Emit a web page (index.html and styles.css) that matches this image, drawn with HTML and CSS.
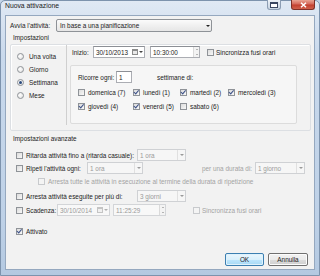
FILE: index.html
```html
<!DOCTYPE html>
<html lang="it">
<head>
<meta charset="utf-8">
<title>Nuova attivazione</title>
<link rel="stylesheet" href="styles.css">
</head>
<body>
<div class="window">
  <div class="titlebar">
    <span class="title">Nuova attivazione</span>
    <span class="tb-btn restore"><svg width="8" height="6" viewBox="0 0 8 6"><rect x="0.5" y="0.5" width="7" height="5" fill="#fff" stroke="#3a4660"/><line x1="0.5" y1="1.5" x2="7.5" y2="1.5" stroke="#3a4660"/></svg></span>
    <span class="tb-btn close"><svg width="7" height="6" viewBox="0 0 7 6"><path d="M1 0.8 L6 5.2 M6 0.8 L1 5.2" stroke="#fff" stroke-width="1.5"/></svg></span>
  </div>
  <div class="client">
    <div class="row start-row">
      <span class="lbl w-avvia">Avvia l'attività:</span>
      <span class="combo main-combo"><span class="combo-text">In base a una pianificazione</span><span class="arrow"></span></span>
    </div>
    <div class="section-label">Impostazioni</div>
    <div class="group">
      <div class="freq">
        <div class="radio-row"><span class="radio"></span>Una volta</div>
        <div class="radio-row"><span class="radio"></span>Giorno</div>
        <div class="radio-row"><span class="radio on"></span>Settimana</div>
        <div class="radio-row"><span class="radio"></span>Mese</div>
      </div>
      <div class="detail">
        <div class="row inizio">
          <span class="lbl w-inizio">Inizio:</span>
          <span class="field date"><span class="field-text">30/10/2013</span><span class="cal"></span></span>
          <span class="field time"><span class="field-text">10:30:00</span><span class="spin"></span></span>
          <span class="cb sync"></span><span class="lbl">Sincronizza fusi orari</span>
        </div>
        <div class="recur">
          <div class="row">
            <span class="lbl w-ricorre">Ricorre ogni:</span>
            <span class="field num"><span class="field-text">1</span></span>
            <span class="lbl settimane">settimane di:</span>
          </div>
          <div class="days">
            <div class="day"><span class="cb"></span>domenica (7)</div>
            <div class="day"><span class="cb on"></span>lunedì (1)</div>
            <div class="day"><span class="cb on"></span>martedì (2)</div>
            <div class="day"><span class="cb on"></span>mercoledì (3)</div>
            <div class="day"><span class="cb on"></span>giovedì (4)</div>
            <div class="day"><span class="cb on"></span>venerdì (5)</div>
            <div class="day"><span class="cb"></span>sabato (6)</div>
          </div>
        </div>
      </div>
    </div>
    <div class="section-label adv-label">Impostazioni avanzate</div>
    <div class="adv">
      <div class="row r1">
        <span class="cb"></span><span class="lbl w-long">Ritarda attività fino a (ritarda casuale):</span>
        <span class="combo dis w49"><span class="combo-text">1 ora</span><span class="arrow"></span></span>
      </div>
      <div class="row r2">
        <span class="cb"></span><span class="lbl w-ripeti">Ripeti l'attività ogni:</span>
        <span class="combo dis w56"><span class="combo-text">1 ora</span><span class="arrow"></span></span>
        <span class="lbl gray durata">per una durata di:</span>
        <span class="combo dis w50"><span class="combo-text">1 giorno</span><span class="arrow"></span></span>
      </div>
      <div class="row r3">
        <span class="cb dis"></span><span class="lbl gray">Arresta tutte le attività in esecuzione al termine della durata di ripetizione</span>
      </div>
      <div class="row r4">
        <span class="cb"></span><span class="lbl w-long">Arresta attività eseguite per più di:</span>
        <span class="combo dis w49"><span class="combo-text">3 giorni</span><span class="arrow"></span></span>
      </div>
      <div class="row r5">
        <span class="cb"></span><span class="lbl w-scad">Scadenza:</span>
        <span class="field dis date2"><span class="field-text">30/10/2014</span><span class="cal"></span></span>
        <span class="field dis time2"><span class="field-text">11:25:29</span><span class="spin"></span></span>
        <span class="cb dis sync2"></span><span class="lbl gray">Sincronizza fusi orari</span>
      </div>
      <div class="row r6">
        <span class="cb on"></span><span class="lbl">Attivato</span>
      </div>
    </div>
    <div class="buttons">
      <span class="btn ok">OK</span>
      <span class="btn">Annulla</span>
    </div>
  </div>
</div>
</body>
</html>
```
FILE: styles.css
```css
html, body {
  margin: 0;
  padding: 0;
}
body {
  width: 320px;
  height: 276px;
  overflow: hidden;
  font-family: "Liberation Sans", Arial, sans-serif;
  font-size: 6.4px;
  color: #222;
  background: #c4d5e8;
}
.window {
  box-sizing: border-box;
  width: 320px;
  height: 276px;
  display: flex;
  flex-direction: column;
  padding: 0 4px 5px 4px;
  background: linear-gradient(#e0e9f4, #c9d9ec 20%, #bed1e7 80%, #b4c9e1);
  border: 1px solid #7d93ad;
  border-radius: 5px 5px 0 0;
}
.titlebar {
  height: 14px;
  display: flex;
  align-items: flex-start;
  flex-shrink: 0;
}
.title {
  font-size: 6.8px;
  line-height: 10px;
  color: #1a1a1a;
}
.tb-btn {
  box-sizing: border-box;
  height: 10px;
  margin-top: -1px;
  display: flex;
  align-items: center;
  justify-content: center;
  border-radius: 0 0 3px 3px;
}
.restore {
  margin-left: auto;
  margin-right: 10px;
  width: 14px;
  border: 1px solid #8c9db3;
  border-top: none;
  background: linear-gradient(#eef2f7, #d8e1eb 50%, #c9d5e2);
}
.close {
  width: 24px;
  border: 1px solid #7f3027;
  border-top: none;
  background: linear-gradient(#e8a493, #d5685a 45%, #c2402f 55%, #d0604c);
}
.client {
  box-sizing: border-box;
  height: 255px;
  display: flex;
  flex-direction: column;
  background: #f2f2f2;
  border: 1px solid #95a8bf;
  padding: 3px 3px 3px 4px;
}
.row {
  display: flex;
  align-items: center;
  height: 12px;
  white-space: nowrap;
}
.lbl {
  white-space: nowrap;
}
.gray {
  color: #a3a3a3;
}
.start-row {
  height: 13px;
}
.w-avvia { width: 46px; }
.combo {
  box-sizing: border-box;
  height: 12px;
  display: flex;
  align-items: center;
  border: 1px solid #a7abb1;
  background: #fff;
  padding-left: 2px;
}
.main-combo {
  width: 156px;
  height: 13px;
  border-color: #8e9297;
  background: linear-gradient(#fbfbfb, #f0f0f0 50%, #e6e6e6);
  border-radius: 2px;
  padding-left: 3px;
}
.combo-text {
  flex: 1;
}
.arrow {
  width: 7px;
  height: 100%;
  display: flex;
  align-items: center;
  justify-content: center;
}
.arrow::after {
  content: "";
  border-left: 2px solid transparent;
  border-right: 2px solid transparent;
  border-top: 2px solid #222;
}
.combo.dis {
  border-color: #cfd1d4;
  background: #f6f6f6;
  color: #9a9a9a;
}
.combo.dis .arrow {
  border-left: 1px solid #e0e0e0;
}
.combo.dis .arrow::after {
  border-top-color: #9a9a9a;
}
.w49 { width: 49px; }
.w56 { width: 56px; }
.w50 { width: 50px; }
.section-label {
  margin-top: 2px;
  height: 8px;
  line-height: 8px;
  padding-left: 3px;
}
.group {
  box-sizing: border-box;
  margin-top: 2px;
  height: 87px;
  display: flex;
  align-items: flex-start;
  border: 1px solid #dcdfe3;
  border-radius: 2px;
  box-shadow: inset 1px 1px 0 #fff;
}
.freq {
  box-sizing: border-box;
  width: 56px;
  height: 80px;
  padding: 5px 0 0 6px;
  border-right: 1px solid #cfcfcf;
}
.radio-row {
  height: 13px;
  display: flex;
  align-items: center;
}
.radio {
  box-sizing: border-box;
  width: 7px;
  height: 7px;
  border-radius: 50%;
  border: 1px solid #8f9398;
  background: radial-gradient(circle at 40% 40%, #fff, #dcdcdc);
  margin-right: 5px;
  display: flex;
  align-items: center;
  justify-content: center;
}
.radio.on::after {
  content: "";
  width: 3px;
  height: 3px;
  border-radius: 50%;
  background: #2a4a7c;
}
.detail {
  flex: 1;
  box-sizing: border-box;
  padding: 1px 13px 0 3px;
}
.inizio {
  padding-left: 2px;
}
.w-inizio { width: 21px; }
.field {
  box-sizing: border-box;
  height: 12px;
  display: flex;
  align-items: center;
  border: 1px solid #abadb3;
  border-top-color: #8c8f95;
  background: #fff;
  padding-left: 2px;
}
.field-text {
  flex: 1;
}
.field.dis {
  border-color: #d3d5d8;
  background: #f8f8f8;
  color: #9a9a9a;
}
.date { width: 52px; margin-right: 5px; }
.time { width: 50px; }
.cal {
  width: 12px;
  height: 8px;
  display: flex;
  align-items: center;
  gap: 1px;
}
.cal::before {
  content: "";
  box-sizing: border-box;
  width: 6px;
  height: 6px;
  border: 1px solid #8c8c8c;
  border-top-width: 2px;
  background: #e9e9e9;
}
.cal::after {
  content: "";
  border-left: 2px solid transparent;
  border-right: 2px solid transparent;
  border-top: 2px solid #444;
}
.field.dis .cal::before { border-color: #c4c4c4; background: #f0f0f0; }
.field.dis .cal::after { border-top-color: #b0b0b0; }
.spin {
  box-sizing: border-box;
  width: 6px;
  height: 10px;
  display: flex;
  flex-direction: column;
  align-items: center;
  justify-content: space-around;
  border-left: 1px solid #dadada;
  background: #f3f3f3;
}
.spin::before {
  content: "";
  border-left: 1.5px solid transparent;
  border-right: 1.5px solid transparent;
  border-bottom: 1.5px solid #777;
}
.spin::after {
  content: "";
  border-left: 1.5px solid transparent;
  border-right: 1.5px solid transparent;
  border-top: 1.5px solid #777;
}
.cb {
  box-sizing: border-box;
  flex-shrink: 0;
  width: 7px;
  height: 7px;
  border: 1px solid #8f9398;
  background: linear-gradient(135deg, #dcdcdc, #f8f8f8);
  margin-right: 3px;
  position: relative;
}
.cb.on::after {
  content: "";
  position: absolute;
  left: 1px;
  top: -0.5px;
  width: 1.5px;
  height: 3.5px;
  border-right: 1.2px solid #3a4f86;
  border-bottom: 1.2px solid #3a4f86;
  transform: rotate(40deg);
}
.cb.dis {
  border-color: #c8cacd;
  background: #f4f4f4;
}
.sync { margin-left: 7px; margin-right: 2px; }
.recur {
  box-sizing: border-box;
  margin-top: 7px;
  height: 59px;
  padding: 5px 0 0 7px;
  border: 1px solid #dcdcdc;
  border-radius: 2px;
  background: #f6f6f6;
}
.w-ricorre { width: 38px; }
.num { width: 16px; }
.settimane { margin-left: 25px; }
.days {
  margin-top: 3px;
  display: grid;
  grid-template-columns: 55px 47px 48px auto;
  grid-auto-rows: 12px;
  row-gap: 2px;
}
.day {
  display: flex;
  align-items: center;
  white-space: nowrap;
}
.adv-label {
  margin-top: 4px;
}
.adv {
  margin-top: 6px;
  padding-left: 6px;
}
.r2 { margin-top: 1px; }
.r3 { margin-top: 1px; padding-left: 22px; }
.r4 { margin-top: 3px; }
.r5 { margin-top: 2px; }
.r6 { margin-top: 9px; }
.w-long { width: 111px; }
.w-ripeti { width: 61px; }
.durata { margin-left: 59px; width: 53px; }
.w-scad { width: 31px; }
.date2 { width: 53px; margin-right: 3px; }
.time2 { width: 53px; }
.sync2 { margin-left: 27px; margin-right: 2px; }
.buttons {
  margin-top: auto;
  display: flex;
  justify-content: flex-end;
  gap: 4px;
  padding-right: 3px;
}
.btn {
  box-sizing: border-box;
  width: 40px;
  height: 13px;
  display: flex;
  align-items: center;
  justify-content: center;
  border: 1px solid #707070;
  border-radius: 2px;
  background: linear-gradient(#f2f2f2, #ebebeb 50%, #dddddd 50%, #cfcfcf);
  box-shadow: inset 0 0 0 1px #fcfcfc;
}
.btn.ok {
  width: 39px;
  border-color: #3c7fb1;
  background: linear-gradient(#eaf6fd, #d9f0fc 50%, #bee6fd 50%, #a7d9f5);
  box-shadow: inset 0 0 0 1px #dff2fc;
}
```
